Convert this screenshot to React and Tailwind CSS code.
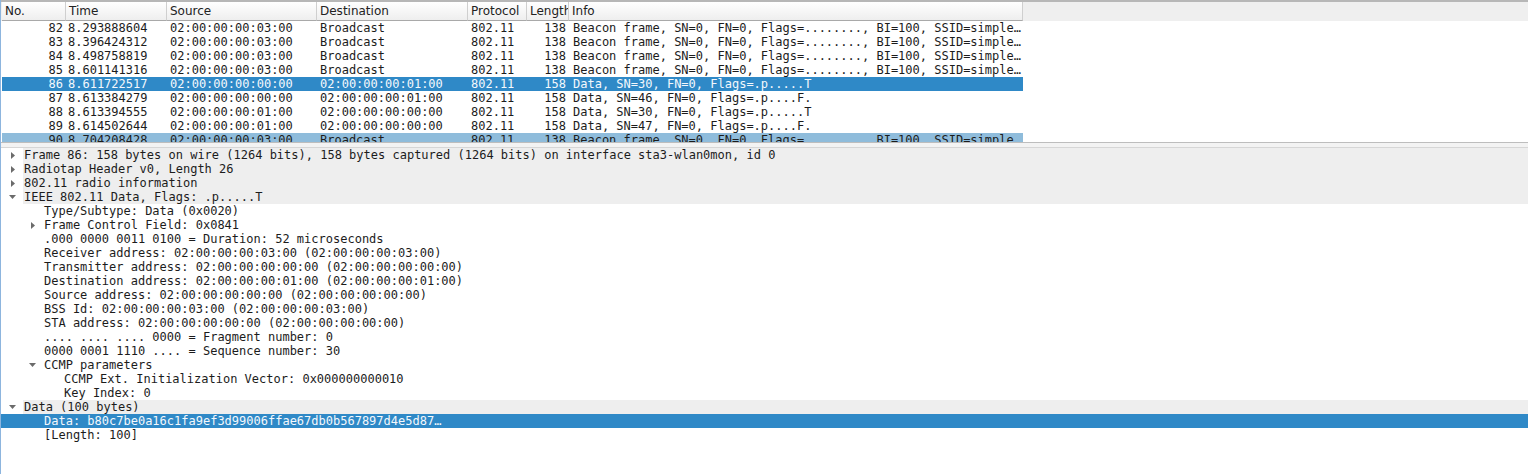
import React from 'react';

const mono = { fontFamily: '"DejaVu Sans Mono", "Liberation Mono", monospace' };

const columns = [
  { key: 'no', label: 'No.', w: 'w-[64px]', align: 'text-right pr-[3px]' },
  { key: 'time', label: 'Time', w: 'w-[101px]', align: 'text-left pl-[2px]' },
  { key: 'src', label: 'Source', w: 'w-[150px]', align: 'text-left pl-[3px]' },
  { key: 'dst', label: 'Destination', w: 'w-[151px]', align: 'text-left pl-[3px]' },
  { key: 'proto', label: 'Protocol', w: 'w-[59px]', align: 'text-left pl-[3px]' },
  { key: 'len', label: 'Length', w: 'w-[42px]', align: 'text-right pr-[3px]' },
  { key: 'info', label: 'Info', w: 'w-[454px]', align: 'text-left pl-[4px]' },
];

const beacon = 'Beacon frame, SN=0, FN=0, Flags=........, BI=100, SSID=simple…';

const packets = [
  { no: 82, time: '8.293888604', src: '02:00:00:00:03:00', dst: 'Broadcast', proto: '802.11', len: 138, info: beacon },
  { no: 83, time: '8.396424312', src: '02:00:00:00:03:00', dst: 'Broadcast', proto: '802.11', len: 138, info: beacon },
  { no: 84, time: '8.498758819', src: '02:00:00:00:03:00', dst: 'Broadcast', proto: '802.11', len: 138, info: beacon },
  { no: 85, time: '8.601141316', src: '02:00:00:00:03:00', dst: 'Broadcast', proto: '802.11', len: 138, info: beacon },
  { no: 86, time: '8.611722517', src: '02:00:00:00:00:00', dst: '02:00:00:00:01:00', proto: '802.11', len: 158, info: 'Data, SN=30, FN=0, Flags=.p.....T', state: 'selected' },
  { no: 87, time: '8.613384279', src: '02:00:00:00:00:00', dst: '02:00:00:00:01:00', proto: '802.11', len: 158, info: 'Data, SN=46, FN=0, Flags=.p....F.' },
  { no: 88, time: '8.613394555', src: '02:00:00:00:01:00', dst: '02:00:00:00:00:00', proto: '802.11', len: 158, info: 'Data, SN=30, FN=0, Flags=.p.....T' },
  { no: 89, time: '8.614502644', src: '02:00:00:00:01:00', dst: '02:00:00:00:00:00', proto: '802.11', len: 158, info: 'Data, SN=47, FN=0, Flags=.p....F.' },
  { no: 90, time: '8.704208428', src: '02:00:00:00:03:00', dst: 'Broadcast', proto: '802.11', len: 138, info: beacon, state: 'related' },
];

const details = [
  { level: 0, arrow: 'closed', text: 'Frame 86: 158 bytes on wire (1264 bits), 158 bytes captured (1264 bits) on interface sta3-wlan0mon, id 0' },
  { level: 0, arrow: 'closed', text: 'Radiotap Header v0, Length 26' },
  { level: 0, arrow: 'closed', text: '802.11 radio information' },
  { level: 0, arrow: 'open', text: 'IEEE 802.11 Data, Flags: .p.....T' },
  { level: 1, text: 'Type/Subtype: Data (0x0020)' },
  { level: 1, arrow: 'closed', text: 'Frame Control Field: 0x0841' },
  { level: 1, text: '.000 0000 0011 0100 = Duration: 52 microseconds' },
  { level: 1, text: 'Receiver address: 02:00:00:00:03:00 (02:00:00:00:03:00)' },
  { level: 1, text: 'Transmitter address: 02:00:00:00:00:00 (02:00:00:00:00:00)' },
  { level: 1, text: 'Destination address: 02:00:00:00:01:00 (02:00:00:00:01:00)' },
  { level: 1, text: 'Source address: 02:00:00:00:00:00 (02:00:00:00:00:00)' },
  { level: 1, text: 'BSS Id: 02:00:00:00:03:00 (02:00:00:00:03:00)' },
  { level: 1, text: 'STA address: 02:00:00:00:00:00 (02:00:00:00:00:00)' },
  { level: 1, text: '.... .... .... 0000 = Fragment number: 0' },
  { level: 1, text: '0000 0001 1110 .... = Sequence number: 30' },
  { level: 1, arrow: 'open', text: 'CCMP parameters' },
  { level: 2, text: 'CCMP Ext. Initialization Vector: 0x000000000010' },
  { level: 2, text: 'Key Index: 0' },
  { level: 0, arrow: 'open', text: 'Data (100 bytes)' },
  { level: 1, text: 'Data: b80c7be0a16c1fa9ef3d99006ffae67db0b567897d4e5d87…', selected: true },
  { level: 1, text: '[Length: 100]' },
];

function Arrow({ open }) {
  const fill = '#6b6b6b';
  if (open) {
    return (
      <svg width="7" height="4" viewBox="0 0 7 4">
        <path d="M0 0 L7 0 L3.5 4 Z" fill={fill} />
      </svg>
    );
  }
  return (
    <svg width="4" height="7" viewBox="0 0 4 7">
      <path d="M0 0 L4 3.5 L0 7 Z" fill={fill} />
    </svg>
  );
}

function PacketRow({ p }) {
  const bg =
    p.state === 'selected'
      ? 'bg-[#2f89c7] text-[#f4f8fc]'
      : p.state === 'related'
      ? 'bg-[#8fbcdb] text-[#1c1c1c]'
      : 'text-[#1c1c1c]';
  return (
    <div className={`flex h-[14px] w-[1021px] shrink-0 text-[12px] leading-[14px] ${bg}`} style={mono}>
      {columns.map((c) => (
        <div key={c.key} className={`${c.w} ${c.align} shrink-0 overflow-hidden whitespace-nowrap`}>
          {p[c.key]}
        </div>
      ))}
    </div>
  );
}

function DetailRow({ d }) {
  const spacer = ['w-px', 'w-[21px]', 'w-[41px]'][d.level];
  const top = d.level === 0;
  const rowBg = d.selected ? 'bg-[#2f89c7] text-[#f4f8fc]' : 'text-[#1c1c1c]';
  return (
    <div className={`flex h-[14px] shrink-0 text-[12px] leading-[14px] whitespace-nowrap ${rowBg}`}>
      <div className={`${spacer} shrink-0 ${d.selected ? '' : 'bg-white'}`} />
      <div className="w-[21px] shrink-0 flex items-center justify-center">
        {d.arrow && <Arrow open={d.arrow === 'open'} />}
      </div>
      <div className={`flex-1 pl-px ${top ? 'bg-[#eeeeee]' : ''}`} style={mono}>
        {d.text}
      </div>
    </div>
  );
}

export default function App() {
  return (
    <div
      className="w-[1528px] h-[474px] overflow-hidden bg-white flex flex-col border-l border-[#8db5de]"
      style={{ fontFamily: '"DejaVu Sans", "Liberation Sans", sans-serif' }}
    >
      {/* top frame line */}
      <div className="h-[2px] shrink-0 bg-[#b7b7b7]" />

      {/* packet list */}
      <div className="h-[140px] shrink-0 flex flex-col overflow-hidden">
        <div className="h-[19px] shrink-0 flex bg-[#efefef]">
          <div className="w-px shrink-0" />
          {columns.map((c) => (
            <div
              key={c.key}
              className={`${c.w} shrink-0 h-[19px] pl-[3px] border-r border-b border-r-[#cfcfcf] border-b-[#a9a9a9] bg-gradient-to-b from-[#ffffff] to-[#eeeeee] text-[12px] leading-[18px] text-[#222] overflow-hidden whitespace-nowrap`}
            >
              {c.label}
            </div>
          ))}
        </div>
        <div className="flex-1 flex flex-col overflow-hidden pl-px">
          {packets.map((p) => (
            <PacketRow key={p.no} p={p} />
          ))}
        </div>
      </div>

      {/* splitter */}
      <div className="h-[6px] shrink-0 border-t border-b border-t-[#bdbdbd] border-b-[#d6d6d6] bg-[#f3f3f3]" />

      {/* packet details */}
      <div className="flex-1 flex flex-col overflow-hidden">
        {details.map((d, i) => (
          <DetailRow key={i} d={d} />
        ))}
      </div>
    </div>
  );
}
